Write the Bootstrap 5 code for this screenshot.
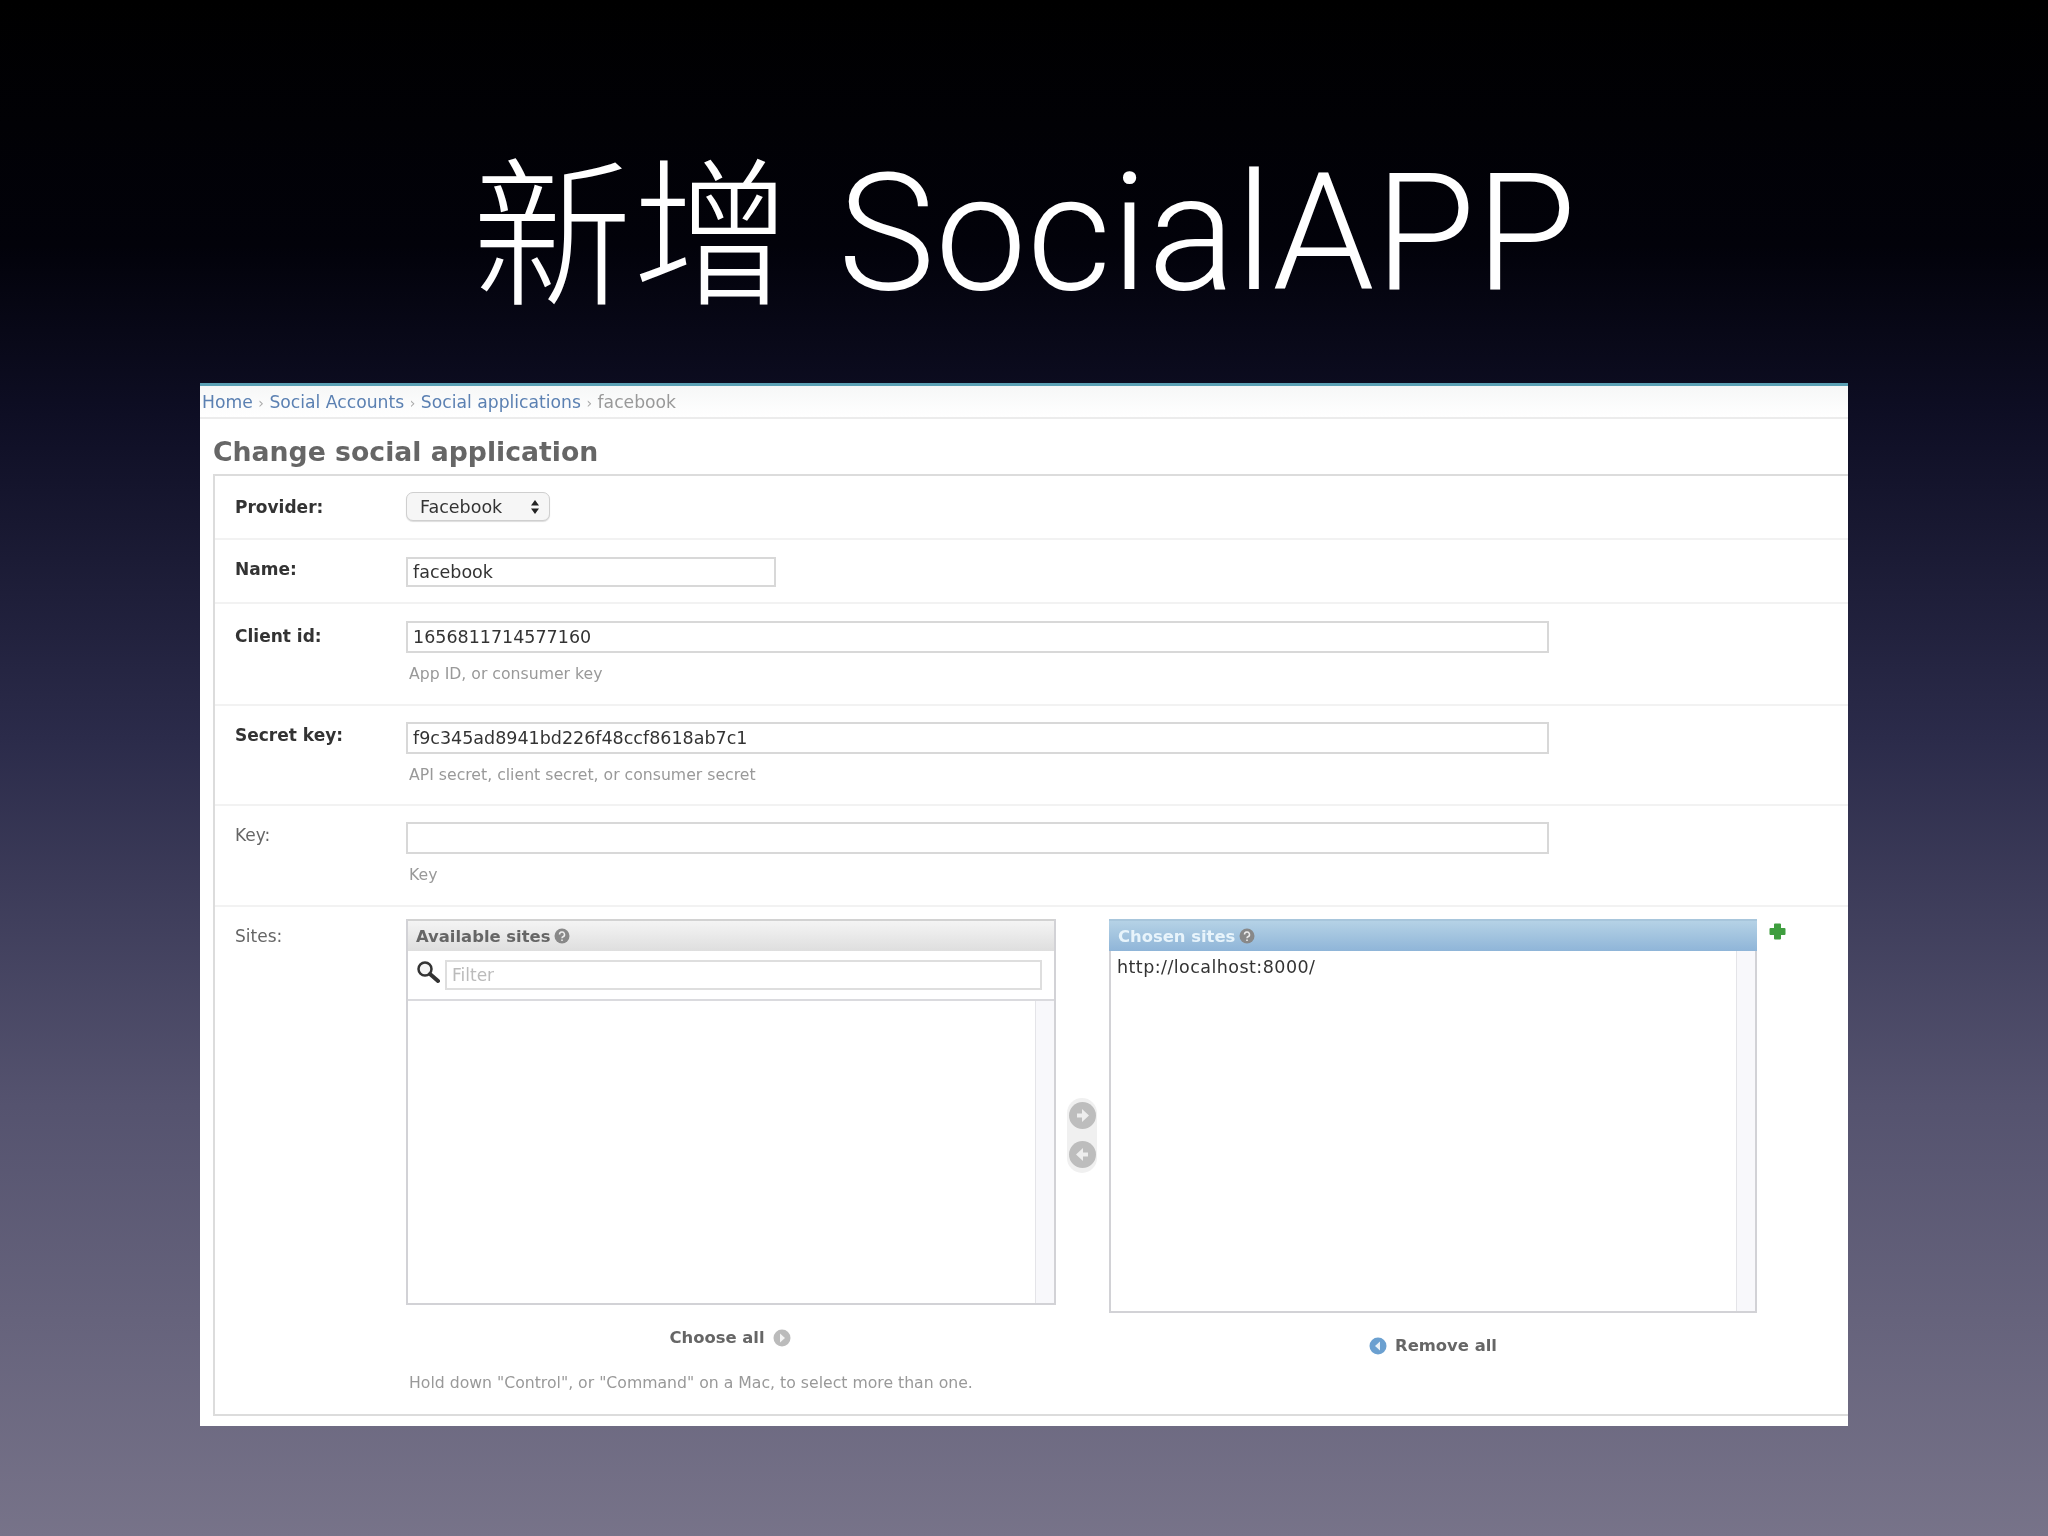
<!DOCTYPE html>
<html lang="zh-Hant">
<head>
    <meta charset="UTF-8" />
    <meta name="viewport" content="width=device-width, initial-scale=1.0" />
    <title>新增 SocialAPP</title>
    <link href="https://cdn.jsdelivr.net/npm/bootstrap@5.3.2/dist/css/bootstrap.min.css" rel="stylesheet">
    <style>
        html, body { height: 100%; }
        body {
            width: 2048px; height: 1536px; overflow: hidden;
            background: linear-gradient(180deg, #000 0%, #02020a 16%, #0e0e24 27%, #2b2b4a 48%, #55536f 72%, #777389 100%);
            font-family: "DejaVu Sans", "Liberation Sans", sans-serif;
        }
        .slide-title {
            height: 383px; padding: 128px 0 0 472px;
            color: #fff; font-weight: 300; font-size: 163.700px; line-height: 190px; white-space: nowrap;
            font-family: Roboto, "Noto Sans CJK TC", sans-serif;
        }
        .cjk-part { margin-right: 6px; vertical-align: -4px; font-family: "Noto Sans CJK TC", sans-serif; font-size: 160px; font-weight: 300; }
        .admin-panel {
            margin-left: 200px; width: 1648px; height: 1043px;
            background: #fff; border-top: 3px solid #5aa0b4; filter: blur(.7px); overflow: hidden;
        }
        .crumbs {
            height: 33px; padding-left: 2px; line-height: 32px; font-size: 17.2px;
            background: linear-gradient(#f6f7f7, #fff); border-bottom: 2px solid #ececec; color: #999;
        }
        .crumbs a { color: #5b80b2; text-decoration: none; }
        .crumbs span { color: #aaa; margin: 0 5.500px; font-size: 14px; }
        .change-title { margin: 17px 0 6px 13px; font-size: 26.700px; line-height: 32px; font-weight: 700; color: #666; }
        .admin-fieldset { margin-left: 13px; height: 942px; border: 2px solid #dcdcdc; border-right: 0; }
        .form-line { padding-left: 20px; border-bottom: 2px solid #f2f2f2; }
        .form-line.no-line { border-bottom: 0; }
        .line-provider { height: 64px; padding-top: 16px; }
        .line-name { height: 64px; padding-top: 17px; }
        .line-client { height: 102px; padding-top: 17px; }
        .line-secret { height: 100px; padding-top: 16px; }
        .line-key { height: 101px; padding-top: 16px; }
        .line-sites { padding-top: 12px; }
        .field-label { width: 171px; flex: none; font-size: 17px; line-height: 24px; color: #666; }
        .field-label.req { font-weight: 700; color: #333; }
        .drop-1 { padding-top: 1px; }
        .drop-3 { padding-top: 3px; }
        .drop-5 { padding-top: 5px; }
        .admin-input {
            display: block; height: 32px; padding: 0 5px; font-size: 17.500px; line-height: 30px; color: #333;
            border: 2px solid #d8d8d8; border-radius: 0; box-shadow: none; font-family: inherit;
        }
        .input-name { width: 370px; height: 30px; line-height: 28px; }
        .input-wide { width: 1143px; }
        .provider-select {
            width: 144px; height: 29px; padding: 0 0 0 13px; font-size: 17.500px; line-height: 26px; color: #333;
            border: 1px solid #cfcfcf; border-radius: 7px; box-shadow: 0 1px 1px #ddd; background-color: #f6f6f6;
            background-size: 10px 14px; background-position: right 9px center;
            background-image: url("data:image/svg+xml,%3Csvg xmlns='http://www.w3.org/2000/svg' viewBox='0 0 10 14'%3E%3Cpath d='M5 0 9 5.500H1zM5 14 1 8.500H9z' fill='%23222'/%3E%3C/svg%3E");
        }
        .field-help { margin: 11px 0 0 3px; font-size: 15.700px; line-height: 20px; color: #999; }
        .picker-col { flex: none; }
        .picker-left { width: 650px; }
        .picker-right { width: 648px; }
        .picker-box { border: 2px solid #d2d2d6; border-top: 0; }
        .picker-head {
            height: 32px; padding-left: 8px; font-size: 16.400px; line-height: 31px; font-weight: 700; color: #666;
            background: linear-gradient(#f4f4f4, #dedede); border-top: 2px solid #d2d2d2;
        }
        .picker-head.chosen { margin: 0 -2px; padding-left: 9px; color: #e8f4fb; background: linear-gradient(#b5d2e6, #8fb5d8); border-top: 2px solid #a8c6dc; }
        .filter-bar { height: 50px; padding: 9px 0 0 8px; border-bottom: 2px solid #dadade; }
        .filter-input { width: 597px; height: 30px; margin-left: 5px; font-size: 17px; line-height: 28px; padding: 0 5px; color: #bbb; border: 2px solid #dedede; }
        .filter-input::placeholder { color: #bbb; }
        .list-area { border-right: 18px solid #f8f8fb; box-shadow: inset -1px 0 0 #e4e4e8; }
        .list-left { height: 302px; }
        .list-right { height: 360px; padding: 5px 0 0 6px; font-size: 17.500px; letter-spacing: .45px; line-height: 22px; color: #333; }
        .move-pill { width: 30px; height: 75px; margin: 179px 12px 0 11px; padding-top: 3px; row-gap: 10px; background: #f0f0f0; border-radius: 15px; }
        .link-all { font-size: 16.400px; line-height: 24px; font-weight: 700; color: #666; }
        .choose-link { margin-top: 21px; padding-right: 2px; }
        .remove-link { margin-top: 21px; }
        .sites-help { margin: 15px 0 0 3px; font-size: 15.700px; line-height: 20px; color: #999; }
        .add-icon { margin: 4px 0 0 12px; }
    </style>
</head>
<body>

<h1 class="slide-title m-0"><span class="cjk-part">新增</span> SocialAPP</h1>

<div class="admin-panel">
    <div class="crumbs"><a href="#">Home</a><span>›</span><a href="#">Social Accounts</a><span>›</span><a href="#">Social applications</a><span>›</span>facebook</div>
    <h2 class="change-title">Change social application</h2>

    <div class="admin-fieldset">
        <div class="form-line line-provider d-flex">
            <div class="field-label req drop-3">Provider:</div>
            <select class="form-select provider-select"><option>Facebook</option></select>
        </div>
        <div class="form-line line-name d-flex">
            <div class="field-label req">Name:</div>
            <input class="admin-input input-name" type="text" value="facebook">
        </div>
        <div class="form-line line-client d-flex">
            <div class="field-label req drop-3">Client id:</div>
            <div>
                <input class="admin-input input-wide" type="text" value="1656811714577160">
                <p class="field-help">App ID, or consumer key</p>
            </div>
        </div>
        <div class="form-line line-secret d-flex">
            <div class="field-label req drop-1">Secret key:</div>
            <div>
                <input class="admin-input input-wide" type="text" value="f9c345ad8941bd226f48ccf8618ab7c1">
                <p class="field-help">API secret, client secret, or consumer secret</p>
            </div>
        </div>
        <div class="form-line line-key d-flex">
            <div class="field-label drop-1">Key:</div>
            <div>
                <input class="admin-input input-wide" type="text">
                <p class="field-help">Key</p>
            </div>
        </div>
        <div class="form-line no-line line-sites d-flex">
            <div class="field-label drop-5">Sites:</div>
            <div>
                <div class="d-flex align-items-start">
                    <div class="picker-col picker-left">
                        <div class="picker-box">
                            <div class="picker-head d-flex align-items-center gap-1">Available sites
                                <svg width="16" height="16" viewBox="0 0 16 16"><circle cx="8" cy="8" r="7.500" fill="#888"/><path d="M5.500 6.500a2.500 2.500 0 1 1 3.500 2.300c-.7.300-1 .6-1 1.400M8 11.500v1.500" fill="none" stroke="#eee" stroke-width="1.500"/></svg>
                            </div>
                            <div class="filter-bar d-flex">
                                <svg width="24" height="24" viewBox="0 0 24 24"><circle cx="9" cy="9" r="6.500" fill="#f4f4f4" stroke="#333" stroke-width="2.500"/><path d="M14 14l8 7" stroke="#333" stroke-width="4" stroke-linecap="round"/></svg>
                                <input class="filter-input" type="text" placeholder="Filter">
                            </div>
                            <div class="list-area list-left"></div>
                        </div>
                        <div class="link-all choose-link d-flex justify-content-center align-items-center gap-2">Choose all
                            <svg width="18" height="18" viewBox="0 0 18 18"><circle cx="9" cy="9" r="8.500" fill="#bbb"/><path d="M7 4.500 12 9l-5 4.500z" fill="#f4f4f4"/></svg>
                        </div>
                    </div>
                    <div class="move-pill d-flex flex-column align-items-center flex-none">
                        <svg width="29" height="29" viewBox="0 0 29 29"><circle cx="14.500" cy="14.500" r="13.500" fill="#bdbdbd"/><path d="M9 12.500h5V8l7 6.500-7 6.500v-4.500H9z" fill="#eee"/></svg>
                        <svg width="29" height="29" viewBox="0 0 29 29"><circle cx="14.500" cy="14.500" r="13.500" fill="#bdbdbd"/><path d="M20 12.500h-5V8l-7 6.500 7 6.500v-4.500h5z" fill="#eee"/></svg>
                    </div>
                    <div class="picker-col picker-right">
                        <div class="picker-box">
                            <div class="picker-head chosen d-flex align-items-center gap-1">Chosen sites
                                <svg width="16" height="16" viewBox="0 0 16 16"><circle cx="8" cy="8" r="7.500" fill="#888"/><path d="M5.500 6.500a2.500 2.500 0 1 1 3.500 2.300c-.7.300-1 .6-1 1.400M8 11.500v1.500" fill="none" stroke="#eee" stroke-width="1.500"/></svg>
                            </div>
                            <div class="list-area list-right">http://localhost:8000/</div>
                        </div>
                        <div class="link-all remove-link d-flex justify-content-center align-items-center gap-2">
                            <svg width="18" height="18" viewBox="0 0 18 18"><circle cx="9" cy="9" r="8.500" fill="#6ba0d0"/><path d="M11 4.500 6 9l5 4.500z" fill="#eaf2f8"/></svg>
                            Remove all
                        </div>
                    </div>
                    <svg class="add-icon flex-none" width="17" height="17" viewBox="0 0 17 17"><path d="M6 1.500h5V6h4.500v5H11v4.500H6V11H1.500V6H6z" fill="#3f9e3f" stroke="#3f9e3f" stroke-width="2" stroke-linejoin="round"/></svg>
                </div>
                <p class="sites-help">Hold down "Control", or "Command" on a Mac, to select more than one.</p>
            </div>
        </div>
    </div>
</div>

<script src="https://cdn.jsdelivr.net/npm/bootstrap@5.3.2/dist/js/bootstrap.bundle.min.js"></script>
</body>
</html>
